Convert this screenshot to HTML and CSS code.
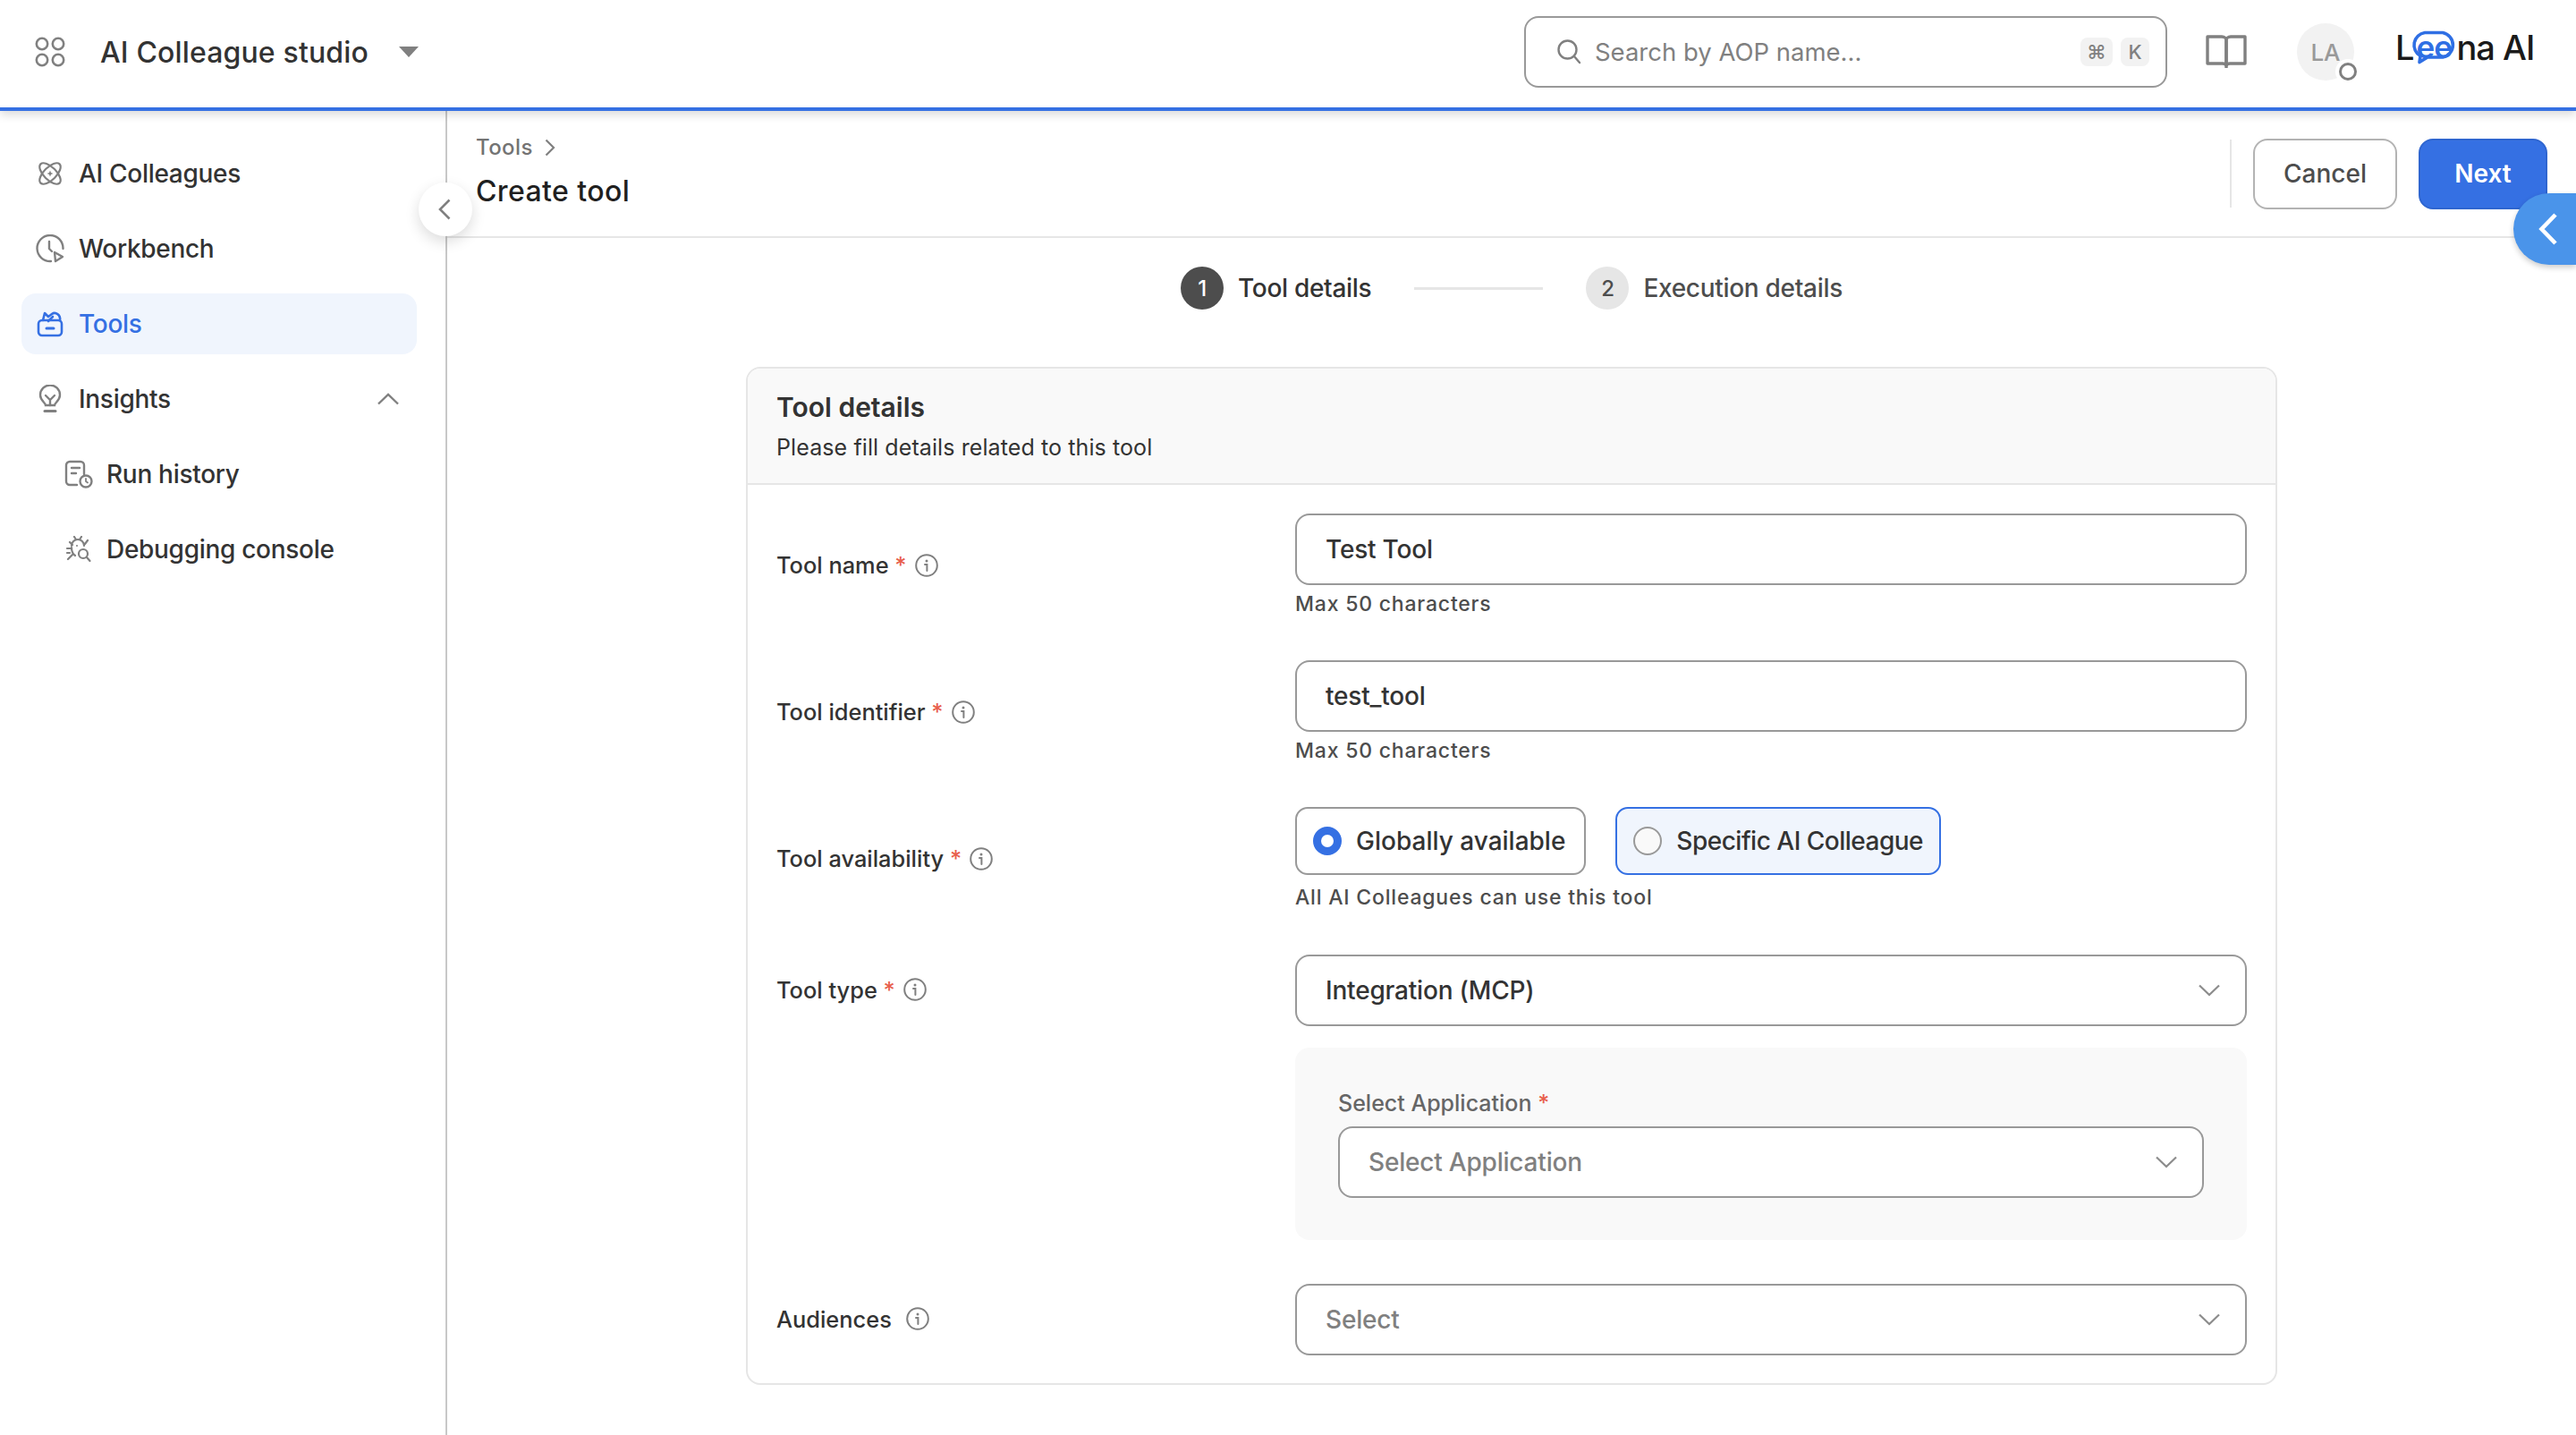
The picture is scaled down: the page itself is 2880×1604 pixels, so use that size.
FILE: index.html
```html
<!DOCTYPE html>
<html lang="en">
<head>
    <meta charset="UTF-8">
    <title>Create tool - AI Colleague studio</title>
    <link rel="stylesheet" href="styles.css">
</head>
<body>

<svg class="sprite" width="0" height="0">
    <symbol id="i-info" viewBox="0 0 26 26">
        <circle cx="13" cy="13" r="11.8" fill="none" stroke="currentColor" stroke-width="2"/>
        <circle cx="13" cy="8" r="1.5" fill="currentColor"/>
        <path d="M11 12h2.4v7" fill="none" stroke="currentColor" stroke-width="2" stroke-linecap="round"/>
    </symbol>
    <symbol id="i-down" viewBox="0 0 24 14">
        <path d="M1 1.5l11 10.5 11-10.5" fill="none" stroke="currentColor" stroke-width="2.2"/>
    </symbol>
</svg>

<header class="topbar">
    <svg class="apps-icon" width="34" height="34" viewBox="0 0 34 34" fill="none" stroke="#808080" stroke-width="2.6">
        <circle cx="8" cy="8" r="6.2"/><circle cx="26" cy="8" r="6.2"/>
        <circle cx="8" cy="26" r="6.2"/><circle cx="26" cy="26" r="6.2"/>
    </svg>
    <div class="app-name">AI Colleague studio</div>
    <div class="app-caret"></div>

    <div class="search">
        <svg width="28" height="30" viewBox="0 0 28 30" fill="none" stroke="#808080" stroke-width="2.4">
            <circle cx="12.5" cy="12.5" r="10"/><path d="M20 20l6 7" stroke-linecap="round"/>
        </svg>
        <span class="search-text">Search by AOP name...</span>
        <span class="kbd kbd-cmd">⌘</span>
        <span class="kbd">K</span>
    </div>

    <svg class="book-icon" width="46" height="40" viewBox="0 0 46 40" fill="none" stroke="#808080" stroke-width="3.4" stroke-linejoin="round">
        <path d="M2 3h16c3 0 5 2 5 4v28c0-1-2-2-4-2H2z"/>
        <path d="M44 3H28c-3 0-5 2-5 4v28c0-1 2-2 4-2h17z"/>
        <path d="M23 33v5"/>
    </svg>

    <div class="avatar">LA<span class="avatar-status"></span></div>

    <div class="logo">
        <span>L</span>
        <span class="logo-ee">
            <svg width="54" height="38" viewBox="0 0 54 38" fill="none" stroke="#2f6fe4" stroke-width="3.6" stroke-linejoin="round">
                <path d="M17 2.5h20a14 14 0 0 1 0 27.500H20l-9 5.500 1-7A14 14 0 0 1 17 2.500z"/>
            </svg>
            <b>ee</b>
        </span>
        <span>na AI</span>
    </div>
</header>

<div class="app">
    <nav class="sidebar">
        <a class="nav-item">
            <svg width="28" height="28" viewBox="0 0 28 28" fill="none" stroke="currentColor" stroke-width="2.200">
                <ellipse cx="14" cy="14" rx="15" ry="7" transform="rotate(45 14 14)"/>
                <ellipse cx="14" cy="14" rx="15" ry="7" transform="rotate(-45 14 14)"/>
                <path d="M14 10.500l1 2.500 2.500 1-2.500 1-1 2.500-1-2.500-2.500-1 2.500-1z" fill="currentColor" stroke="none"/>
            </svg>
            AI Colleagues
        </a>
        <a class="nav-item">
            <svg width="32" height="32" viewBox="0 0 32 32" fill="none" stroke="currentColor" stroke-width="2.400" stroke-linecap="round" stroke-linejoin="round">
                <path d="M17 30A14.500 14.500 0 1 1 30.500 16"/>
                <path d="M15 8v8l3 3"/>
                <path d="M21 20l9 5-8 5z"/>
            </svg>
            Workbench
        </a>
        <a class="nav-item active">
            <svg width="30" height="30" viewBox="0 0 30 30" fill="none" stroke="currentColor" stroke-width="2.600" stroke-linecap="round" stroke-linejoin="round">
                <rect x="2" y="11" width="26" height="17" rx="4"/>
                <path d="M7 11l2-8 4 4 4-3c4-3 10 1 9 7"/>
                <path d="M13 12l5-5"/>
                <path d="M11 20h8" stroke-width="3"/>
            </svg>
            Tools
        </a>
        <a class="nav-item">
            <svg width="26" height="32" viewBox="0 0 26 32" fill="none" stroke="currentColor" stroke-width="2.400" stroke-linecap="round">
                <path d="M8 23c0-3-6-5-6-11.500a11 11 0 0 1 22 0C24 18 18 20 18 23z"/>
                <path d="M8 12l5 5 5-5M13 17v6"/>
                <path d="M7 29.500h12" stroke-width="3"/>
            </svg>
            Insights
            <svg class="nav-toggle" width="24" height="14" viewBox="0 0 24 14" fill="none" stroke="#808080" stroke-width="2.400">
                <path d="M1 12.500L12 2l11 10.500"/>
            </svg>
        </a>
        <a class="nav-item sub">
            <svg width="32" height="32" viewBox="0 0 32 32" fill="none" stroke="currentColor" stroke-width="2.400" stroke-linecap="round">
                <path d="M14 28H6a4 4 0 0 1-4-4V6a4 4 0 0 1 4-4h12a4 4 0 0 1 4 4v10"/>
                <path d="M8 9h9M8 15h5"/>
                <circle cx="24" cy="24" r="6.500"/>
                <path d="M24 21v3l2 1.500" stroke-width="1.800"/>
            </svg>
            Run history
        </a>
        <a class="nav-item sub">
            <svg width="28" height="30" viewBox="0 0 28 30" fill="none" stroke="currentColor" stroke-width="2.200" stroke-linecap="round">
                <path d="M6 11a7 7 0 0 1 14 0M11 4L9 1M15 4l2-3M4 7l3 3M24 5l-3 4M1 14h5M2 26l5-5M1 19h3M10 22c-3-2-4-5-4-9"/>
                <circle cx="19" cy="20" r="5"/>
                <path d="M23 24l3.500 4"/>
                <circle cx="12" cy="11" r="1" fill="currentColor" stroke="none"/>
            </svg>
            Debugging console
        </a>
    </nav>

    <main class="main">
        <button class="collapse-btn">
            <svg width="14" height="24" viewBox="0 0 14 24" fill="none" stroke="#808080" stroke-width="2.600"><path d="M12.500 1.500L2 12l10.500 10.500"/></svg>
        </button>
        <button class="side-tab">
            <svg width="22" height="36" viewBox="0 0 22 36" fill="none" stroke="#fff" stroke-width="4.600"><path d="M19 2L3.500 18 19 34"/></svg>
        </button>

        <div class="page-head">
            <div class="page-title">
                <div class="crumb">Tools
                    <svg width="12" height="20" viewBox="0 0 12 20" fill="none" stroke="#808080" stroke-width="2.200"><path d="M1.500 1.500L10 10l-8.500 8.500"/></svg>
                </div>
                <h1>Create tool</h1>
            </div>
            <div class="head-divider"></div>
            <button class="btn btn-cancel">Cancel</button>
            <button class="btn btn-next">Next</button>
        </div>

        <div class="stepper">
            <span class="step-num current">1</span>
            <span class="step-label current">Tool details</span>
            <span class="step-line"></span>
            <span class="step-num">2</span>
            <span class="step-label">Execution details</span>
        </div>

        <section class="card">
            <div class="card-head">
                <h2>Tool details</h2>
                <p>Please fill details related to this tool</p>
            </div>
            <div class="card-body">
                <div class="field">
                    <label>Tool name <em>*</em> <svg class="info"><use href="#i-info"/></svg></label>
                    <div class="control">
                        <div class="input">Test Tool</div>
                        <div class="help">Max 50 characters</div>
                    </div>
                </div>
                <div class="field">
                    <label>Tool identifier <em>*</em> <svg class="info"><use href="#i-info"/></svg></label>
                    <div class="control">
                        <div class="input">test_tool</div>
                        <div class="help">Max 50 characters</div>
                    </div>
                </div>
                <div class="field field-radios">
                    <label>Tool availability <em>*</em> <svg class="info"><use href="#i-info"/></svg></label>
                    <div class="control">
                        <div class="radios">
                            <div class="radio-box"><span class="radio on"></span>Globally available</div>
                            <div class="radio-box focus"><span class="radio"></span>Specific AI Colleague</div>
                        </div>
                        <div class="help radio-help">All AI Colleagues can use this tool</div>
                    </div>
                </div>
                <div class="field field-type">
                    <label>Tool type <em>*</em> <svg class="info"><use href="#i-info"/></svg></label>
                    <div class="control">
                        <div class="input select">Integration (MCP)<svg class="down"><use href="#i-down"/></svg></div>
                    </div>
                </div>
                <div class="sub-panel">
                    <div class="sub-label">Select Application <em>*</em></div>
                    <div class="input select placeholder">Select Application<svg class="down"><use href="#i-down"/></svg></div>
                </div>
                <div class="field field-last">
                    <label>Audiences <svg class="info"><use href="#i-info"/></svg></label>
                    <div class="control">
                        <div class="input select placeholder">Select<svg class="down"><use href="#i-down"/></svg></div>
                    </div>
                </div>
            </div>
        </section>
    </main>
</div>

</body>
</html>
```

FILE: styles.css
```css
* {
    box-sizing: border-box;
}

body {
    margin: 0;
    height: 1604px;
    overflow: hidden;
    background: #fff;
    color: #333;
    font-family: 'Inter', 'Liberation Sans', sans-serif;
    font-weight: 500;
}

.sprite {
    position: absolute;
}

/* top bar */
.topbar {
    display: flex;
    align-items: center;
    height: 124px;
    padding-left: 39px;
    padding-bottom: 4px;
    border-bottom: 4px solid #3570e3;
    box-shadow: 0 4px 10px rgba(0, 0, 0, 0.15);
    position: relative;
    z-index: 2;
    background: #fff;
}

.app-name {
    margin-left: 39px;
    font-size: 32px;
    letter-spacing: 0.15px;
    color: #333;
}

.app-caret {
    margin-left: 34px;
    margin-right: 1238px;
    border-left: 11px solid transparent;
    border-right: 11px solid transparent;
    border-top: 12px solid #808080;
}

.search {
    display: flex;
    align-items: center;
    width: 719px;
    height: 80px;
    padding: 0 18px 0 34px;
    border: 2px solid #999;
    border-radius: 16px;
    margin-left: -2px;
}

.search-text {
    flex: 1;
    margin-left: 15px;
    font-size: 27.5px;
    font-weight: 400;
    color: #808080;
}

.kbd {
    display: flex;
    align-items: center;
    justify-content: center;
    width: 32px;
    height: 32px;
    margin-left: 9px;
    border-radius: 8px;
    background: #f2f2f2;
    color: #808080;
    font-size: 22px;
}

.kbd-cmd {
    width: 36px;
}

.book-icon {
    margin-left: 43px;
}

.avatar {
    position: relative;
    display: flex;
    align-items: center;
    justify-content: center;
    width: 64px;
    height: 64px;
    margin-left: 56px;
    border-radius: 50%;
    background: #f2f2f2;
    color: #999;
    font-size: 26px;
}

.avatar-status {
    position: absolute;
    right: -3px;
    bottom: 0;
    width: 20px;
    height: 20px;
    border: 3px solid #808080;
    border-radius: 50%;
    background: #fff;
    box-shadow: 0 0 0 4px #fff;
}

.logo {
    display: flex;
    align-items: flex-start;
    height: 60px;
    margin-left: 46px;
    color: #1a1a1a;
    font-size: 38px;
    font-weight: 500;
    line-height: 50px;
    letter-spacing: -1px;
    white-space: nowrap;
}

.logo-ee {
    position: relative;
    width: 52px;
    margin: 0 0 0 -4px;
    color: #2f6fe4;
}

.logo-ee svg {
    position: absolute;
    left: 0;
    top: 6px;
}

.logo-ee b {
    position: absolute;
    left: 7px;
    top: -1px;
    font-size: 35px;
    font-weight: 600;
}

/* sidebar */
.app {
    display: flex;
    height: 1480px;
}

.sidebar {
    display: flex;
    flex-direction: column;
    gap: 16px;
    width: 500px;
    padding: 36px 32px 0 24px;
    border-right: 2px solid #c8c8c8;
}

.nav-item {
    display: flex;
    align-items: center;
    height: 68px;
    padding-left: 16px;
    border-radius: 16px;
    font-size: 28px;
    letter-spacing: -0.3px;
    color: #333;
}

.nav-item svg:first-child {
    flex: none;
    width: 32px;
    margin-right: 16px;
    color: #808080;
}

.nav-item.sub {
    padding-left: 48px;
}

.nav-item.sub svg:first-child {
    margin-right: 15px;
}

.nav-item.active {
    background: #f0f5fd;
    color: #3570e3;
}

.nav-item.active svg:first-child {
    color: #3570e3;
}

.nav-toggle {
    margin-left: auto;
    margin-right: 20px;
}

/* main column */
.main {
    position: relative;
    flex: 1;
    min-width: 0;
}

.collapse-btn {
    position: absolute;
    left: -32px;
    top: 80px;
    display: flex;
    align-items: center;
    justify-content: center;
    width: 60px;
    height: 60px;
    padding: 0 3px 0 0;
    border: none;
    border-radius: 50%;
    background: #fff;
    box-shadow: 0 6px 16px rgba(0, 0, 0, 0.14);
    z-index: 1;
}

.side-tab {
    position: absolute;
    right: 0;
    top: 92px;
    display: flex;
    align-items: center;
    justify-content: center;
    width: 70px;
    height: 80px;
    padding: 0 0 0 7px;
    border: none;
    border-radius: 40px 0 0 40px;
    background: #4a94ea;
    box-shadow: 0 3px 6px rgba(0, 0, 0, 0.2);
    z-index: 1;
}

.page-head {
    display: flex;
    align-items: center;
    height: 142px;
    padding: 0 32px 0 32px;
    border-bottom: 2px solid #e6e6e6;
}

.page-title {
    flex: 1;
    padding-bottom: 5px;
}

.crumb {
    display: flex;
    align-items: center;
    gap: 13px;
    font-size: 24px;
    color: #737373;
    letter-spacing: 0.4px;
    line-height: 30px;
}

h1 {
    margin: 14px 0 0;
    font-size: 32px;
    font-weight: 500;
    letter-spacing: 0.4px;
    color: #1f1f1f;
    line-height: 40px;
}

.head-divider {
    width: 2px;
    height: 76px;
    background: #e6e6e6;
    margin: 0 24px 0 0;
}

.btn {
    height: 79px;
    border-radius: 16px;
    font-family: inherit;
    font-size: 28px;
    font-weight: 500;
}

.btn-cancel {
    width: 161px;
    border: 2px solid #b3b3b3;
    background: #fff;
    color: #4d4d4d;
}

.btn-next {
    width: 144px;
    margin-left: 24px;
    border: 2px solid #2f66d0;
    background: #3570e3;
    color: #fff;
    font-weight: 600;
}

/* stepper */
.stepper {
    display: flex;
    align-items: center;
    justify-content: center;
    height: 144px;
    padding-bottom: 32px;
    font-size: 28px;
    letter-spacing: -0.3px;
}

.step-num {
    display: flex;
    align-items: center;
    justify-content: center;
    width: 48px;
    height: 48px;
    border-radius: 50%;
    background: #e6e6e6;
    color: #4d4d4d;
    font-size: 24px;
}

.step-num.current {
    background: #4d4d4d;
    color: #fff;
}

.step-label {
    margin-left: 16px;
    color: #4d4d4d;
}

.step-label.current {
    color: #333;
}

.step-line {
    width: 144px;
    height: 3px;
    margin: 0 48px;
    background: #e6e6e6;
}

/* form card */
.card {
    width: 1712px;
    height: 1138px;
    margin: 0 auto;
    border: 2px solid #e6e6e6;
    border-radius: 16px;
    overflow: hidden;
}

.card-head {
    height: 130px;
    padding: 23px 32px 0;
    background: #f9f9f9;
    border-bottom: 2px solid #e6e6e6;
}

h2 {
    margin: 0;
    font-size: 30px;
    font-weight: 600;
    line-height: 40px;
    color: #333;
}

.card-head p {
    margin: 7px 0 0;
    font-size: 25px;
    font-weight: 400;
    line-height: 36px;
    letter-spacing: 0.1px;
    color: #333;
}

.card-body {
    padding: 32px 32px 0;
}

.field {
    display: flex;
    align-items: center;
    margin-bottom: 47px;
}

.field label {
    display: flex;
    align-items: center;
    flex: none;
    width: 580px;
    padding-bottom: 2px;
    font-size: 25.4px;
    color: #333;
    white-space: pre;
}

em {
    font-style: normal;
    color: #e8604c;
}

.info {
    width: 26px;
    height: 26px;
    margin-left: 9px;
    color: #808080;
}

.control {
    flex: 1;
    min-width: 0;
}

.input {
    display: flex;
    align-items: center;
    height: 80px;
    padding: 0 32px;
    border: 2px solid #999;
    border-radius: 16px;
    background: #fff;
    font-size: 28px;
    letter-spacing: -0.2px;
    color: #333;
}

.select {
    justify-content: space-between;
}

.placeholder {
    color: #808080;
}

.down {
    width: 24px;
    height: 14px;
    margin-right: -4px;
    color: #8c8c8c;
}

.help {
    margin-top: 5px;
    font-size: 23px;
    font-weight: 500;
    line-height: 32px;
    letter-spacing: 0.8px;
    color: #4d4d4d;
}

.radios {
    display: flex;
    gap: 33px;
}

.radio-box {
    display: flex;
    align-items: center;
    height: 76px;
    padding: 0 21px 0 18px;
    border: 2px solid #999;
    border-radius: 14px;
    font-size: 28px;
    color: #333;
    white-space: nowrap;
}

.radio-box.focus {
    padding-right: 18px;
    border-color: #3570e3;
    background: #f0f5fd;
    letter-spacing: -0.5px;
}

.radio {
    flex: none;
    width: 32px;
    height: 32px;
    margin-right: 16px;
    border: 2px solid #999;
    border-radius: 50%;
    background: #f9f9f9;
}

.radio.on {
    border: 9px solid #3570e3;
    background: #fff;
}

.radio-help {
    margin-top: 9px;
}

.field-radios {
    margin-bottom: 48px;
}

.field-type {
    margin-bottom: 24px;
}

.sub-panel {
    height: 215px;
    margin: 0 0 49px 580px;
    padding: 46px 48px 0;
    background: #f9f9f9;
    border-radius: 16px;
}

.sub-label {
    margin-bottom: 10px;
    font-size: 25px;
    line-height: 32px;
    color: #666;
}

.field-last {
    margin-bottom: 0;
}
```
